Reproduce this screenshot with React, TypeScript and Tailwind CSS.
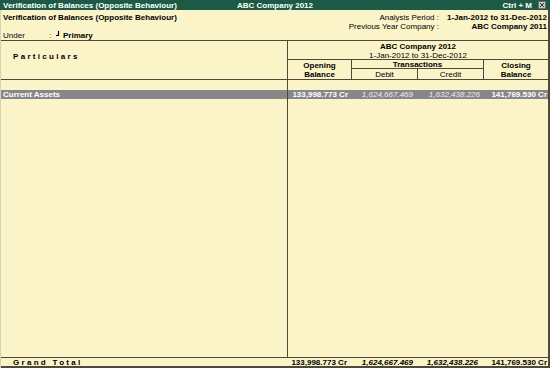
import React from "react";

const line = "border-[#4d4a3c]";

export default function App() {
  return (
    <div
      className="w-[550px] h-[368px] bg-[#fbf4c8] flex flex-col text-[8px] leading-[9px] text-black overflow-hidden whitespace-nowrap"
      style={{ fontFamily: '"Liberation Sans", Arial, sans-serif' }}
    >
      {/* Title bar */}
      <div className="h-[10px] bg-[#1d5a45] text-white font-bold flex items-center relative px-[3px]">
        <span>Verification of Balances (Opposite Behaviour)</span>
        <span className="absolute left-0 right-0 text-center pointer-events-none">ABC Company 2012</span>
        <span className="ml-auto mr-[6px]">Ctrl + M</span>
        <span className="w-[8px] h-[8px] bg-[#c8c8c8] border border-[#6b6b6b] flex items-center justify-center mr-[1px]">
          <svg width="6" height="6" viewBox="0 0 6 6">
            <path d="M1 1L5 5M5 1L1 5" stroke="#333" strokeWidth="1" />
          </svg>
        </span>
      </div>

      <div className={`flex-1 flex flex-col border-r-2 border-l ${line} border-l-[#d9d4b0]`}>
        {/* Info area */}
        <div className={`h-[31px] border-b ${line} flex`}>
          <div className="flex-1 flex flex-col pl-[2px] pt-[3px]">
            <div className="font-bold h-[9px]">Verification of Balances (Opposite Behaviour)</div>
            <div className="h-[9px]" />
            <div className="h-[9px] flex items-center">
              <span className="w-[46px]">Under</span>
              <span className="w-[6px]">:</span>
              <svg width="5" height="6" viewBox="0 0 5 6" className="mr-[3px] -mt-[3px]">
                <path d="M3.5 0V4.5H1" stroke="#000" strokeWidth="1.2" fill="none" />
              </svg>
              <span className="font-bold">Primary</span>
            </div>
          </div>
          <div className="flex flex-col pt-[3px] pr-[1px]">
            <div className="h-[9px] flex">
              <span className="w-[140px] text-right">Analysis Period :</span>
              <span className="w-[108px] text-right font-bold">1-Jan-2012 to 31-Dec-2012</span>
            </div>
            <div className="h-[9px] flex">
              <span className="w-[140px] text-right">Previous Year Company :</span>
              <span className="w-[108px] text-right font-bold">ABC Company 2011</span>
            </div>
          </div>
        </div>

        {/* Column headers */}
        <div className={`h-[39px] flex border-b ${line}`}>
          <div className={`w-[287px] border-r ${line} pl-[12px] pt-[11px]`}>
            <span className="font-bold tracking-[2.3px]">Particulars</span>
          </div>
          <div className="flex-1 flex flex-col">
            <div className={`h-[19px] border-b ${line} flex flex-col items-center pt-[1px]`}>
              <span className="font-bold">ABC Company 2012</span>
              <span>1-Jan-2012 to 31-Dec-2012</span>
            </div>
            <div className="flex-1 flex">
              <div className={`w-[64px] border-r ${line} flex flex-col items-center font-bold pt-[1px]`}>
                <span>Opening</span>
                <span>Balance</span>
              </div>
              <div className={`w-[132px] border-r ${line} flex flex-col`}>
                <div className={`h-[9px] border-b ${line} text-center font-bold`}>Transactions</div>
                <div className="flex-1 flex">
                  <div className={`w-[66px] border-r ${line} text-center pt-[1px]`}>Debit</div>
                  <div className="flex-1 text-center pt-[1px]">Credit</div>
                </div>
              </div>
              <div className="flex-1 flex flex-col items-center font-bold pt-[1px]">
                <span>Closing</span>
                <span>Balance</span>
              </div>
            </div>
          </div>
        </div>

        {/* Body */}
        <div className={`flex-1 flex flex-col border-b ${line}`}>
          <div className="h-[10px] flex">
            <div className={`w-[287px] border-r ${line}`} />
          </div>
          <div className="h-[9px] flex bg-[#878787] text-white">
            <div className={`w-[287px] border-r ${line} font-bold pl-[2px]`}>Current Assets</div>
            <div className="w-[64px] text-right pr-[4px] font-bold">133,998.773 Cr</div>
            <div className="w-[66px] text-right pr-[5px] italic text-[#eeeeee]">1,624,667.469</div>
            <div className="w-[66px] text-right pr-[4px] italic text-[#eeeeee]">1,632,438.226</div>
            <div className="flex-1 text-right pr-[1px] font-bold">141,769.530 Cr</div>
          </div>
          <div className="flex-1 flex">
            <div className={`w-[287px] border-r ${line}`} />
          </div>
        </div>

        {/* Grand total */}
        <div className={`h-[10px] flex items-center font-bold border-b-2 ${line}`}>
          <div className="w-[287px] pl-[12px] tracking-[2.3px]">Grand Total</div>
          <div className="w-[64px] text-right pr-[5px]">133,998.773 Cr</div>
          <div className="w-[66px] text-right pr-[5px] italic">1,624,667.469</div>
          <div className="w-[66px] text-right pr-[6px] italic">1,632,438.226</div>
          <div className="flex-1 text-right pr-[1px]">141,769.530 Cr</div>
        </div>
      </div>
    </div>
  );
}
